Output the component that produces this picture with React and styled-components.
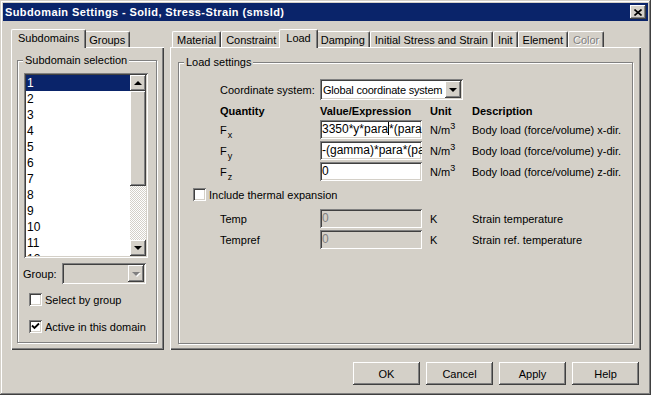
import React from 'react'
import styled, { createGlobalStyle } from 'styled-components'

const GlobalStyle = createGlobalStyle`
  html, body { margin: 0; padding: 0; background: #d4d0c8; }
  body {
    font-family: "Liberation Sans", Arial, sans-serif;
    font-size: 11px;
    color: #000;
  }
  * { box-sizing: border-box; }
`

const raised = `
  box-shadow: inset -1px -1px #404040, inset 1px 1px #fff, inset -2px -2px #808080, inset 2px 2px #d4d0c8;
`
const sunken = `
  box-shadow: inset 1px 1px #808080, inset -1px -1px #fff, inset 2px 2px #404040, inset -2px -2px #d4d0c8;
`

const Window = styled.div`
  width: 651px;
  height: 395px;
  background: #d4d0c8;
  padding: 3px;
  display: flex;
  flex-direction: column;
  box-shadow: inset -1px -1px #404040, inset 1px 1px #d4d0c8, inset -2px -2px #808080, inset 2px 2px #fff;
`

const TitleBar = styled.div`
  height: 18px;
  background: #0a246a;
  color: #fff;
  font-weight: bold;
  letter-spacing: 0.4px;
  display: flex;
  align-items: center;
  justify-content: space-between;
  padding: 0 2px 0 2px;
`

const CloseButton = styled.div`
  width: 16px;
  height: 14px;
  background: #d4d0c8;
  display: flex;
  align-items: center;
  justify-content: center;
  ${raised}
`

const Content = styled.div`
  display: flex;
  gap: 6px;
  padding: 8px 7px 0 8px;
`

const Column = styled.div`
  width: ${p => p.$w}px;
  display: flex;
  flex-direction: column;
`

const TabStrip = styled.div`
  height: 18px;
  display: flex;
  align-items: flex-end;
  padding-left: 2px;
`

const Tab = styled.div`
  position: relative;
  height: ${p => (p.$active ? 19 : 16)}px;
  margin: 0 ${p => (p.$active ? -2 : 0)}px ${p => (p.$active ? -1 : 0)}px;
  z-index: ${p => (p.$active ? 2 : 1)};
  padding: 0 ${p => (p.$active ? 6 : 4)}px ${p => (p.$active ? 2 : 0)}px;
  display: flex;
  align-items: center;
  background: #d4d0c8;
  border-top: 1px solid #fff;
  border-left: 1px solid #fff;
  border-right: 1px solid #404040;
  border-top-left-radius: 2px;
  border-top-right-radius: 2px;
  box-shadow: inset -1px 0 #808080;
  color: ${p => (p.$disabled ? '#808080' : '#000')};
  text-shadow: ${p => (p.$disabled ? '1px 1px #fff' : 'none')};
  white-space: nowrap;
`

const TabPanel = styled.div`
  height: 303px;
  display: flex;
  flex-direction: column;
  padding: ${p => p.$pad};
  box-shadow: inset 1px 1px #fff, inset -1px -1px #404040, inset -2px -2px #808080;
`

const GroupBox = styled.div`
  flex: 1;
  display: flex;
  flex-direction: column;
  border: 1px solid #808080;
  box-shadow: inset 1px 1px #fff, 1px 1px #fff;
`

const Legend = styled.span`
  align-self: flex-start;
  margin: -7px 0 0 5px;
  padding: 0 2px;
  line-height: 13px;
  background: #d4d0c8;
`

const ListBox = styled.div`
  margin: 6px 0 0 6px;
  width: 124px;
  height: 185px;
  background: #fff;
  padding: 2px;
  display: flex;
  ${sunken}
`

const Items = styled.div`
  flex: 1;
  overflow: hidden;
`

const Item = styled.div`
  height: 16px;
  line-height: 16px;
  padding-left: 1px;
  font-size: 12px;
  background: ${p => (p.$selected ? '#0a246a' : 'transparent')};
  color: ${p => (p.$selected ? '#fff' : '#000')};
`

const ScrollBar = styled.div`
  width: 16px;
  display: flex;
  flex-direction: column;
`

const ScrollButton = styled.div`
  width: 16px;
  height: ${p => p.$h || 16}px;
  background: #d4d0c8;
  display: flex;
  align-items: center;
  justify-content: center;
  ${raised}
`

const Track = styled.div`
  flex: 1;
  background: repeating-conic-gradient(#fff 0 25%, #d4d0c8 0 50%) 0 0 / 2px 2px;
`

const Triangle = styled.span`
  width: 0;
  height: 0;
  border-left: 4px solid transparent;
  border-right: 4px solid transparent;
  ${p => (p.$up ? 'border-bottom' : 'border-top')}: 4px solid ${p => (p.$disabled ? '#808080' : '#000')};
  ${p => (p.$disabled ? 'filter: drop-shadow(1px 1px 0 #fff);' : '')}
`

const FieldRow = styled.div`
  display: flex;
  align-items: center;
  margin: ${p => p.$m || '0'};
  padding-left: ${p => p.$indent || 0}px;
`

const Label = styled.span`
  width: ${p => p.$w}px;
  flex-shrink: 0;
`

const Combo = styled.div`
  width: ${p => p.$w}px;
  height: 21px;
  padding: 2px;
  display: flex;
  align-items: center;
  background: ${p => (p.$disabled ? '#d4d0c8' : '#fff')};
  ${sunken}
`

const ComboText = styled.span`
  flex: 1;
  padding-left: 1px;
  letter-spacing: -0.2px;
  white-space: nowrap;
  overflow: hidden;
`

const ComboButton = styled(ScrollButton)`
  height: 17px;
`

const CheckRow = styled.label`
  display: flex;
  align-items: center;
  gap: 3px;
  height: 13px;
  margin: ${p => p.$m};
`

const CheckBox = styled.span`
  width: 13px;
  height: 13px;
  background: #fff;
  display: flex;
  align-items: center;
  justify-content: center;
  ${sunken}
`

const FormGrid = styled.div`
  display: grid;
  grid-template-columns: 100px 110px 42px 1fr;
  grid-template-rows: ${p => (p.$header ? '13px' : '19px')};
  grid-auto-rows: 19px;
  row-gap: 2px;
  align-items: center;
  margin: ${p => p.$m};
  padding-left: 41px;
`

const HeadCell = styled.span`
  font-weight: bold;
  line-height: 13px;
  margin-bottom: 1px;
`

const Input = styled.div`
  width: 102px;
  height: 19px;
  padding: 2px 2px 0;
  font-size: 12px;
  line-height: 15px;
  white-space: nowrap;
  overflow: hidden;
  background: ${p => (p.$disabled ? '#d4d0c8' : '#fff')};
  color: ${p => (p.$disabled ? '#808080' : '#000')};
  ${sunken}
`

const Caret = styled.span`
  display: inline-block;
  width: 1px;
  height: 13px;
  background: #000;
  vertical-align: -2px;
`

const Sub = styled.sub`
  font-size: 9px;
  vertical-align: -4px;
  line-height: 0;
  margin-left: 1px;
`

const Sup = styled.sup`
  font-size: 9px;
  vertical-align: 5px;
  line-height: 0;
`

const Footer = styled.div`
  display: flex;
  justify-content: flex-end;
  gap: 6px;
  padding: 12px 9px 7px 0;
`

const PushButton = styled.div`
  width: 67px;
  height: 23px;
  display: flex;
  align-items: center;
  justify-content: center;
  background: #d4d0c8;
  ${raised}
`

const Check = () => (
  <svg width="9" height="9" viewBox="0 0 9 9">
    <path d="M1 3.5 L3.5 6 L8 1.5" stroke="#000" strokeWidth="1.8" fill="none" />
  </svg>
)

const CloseX = () => (
  <svg width="8" height="7" viewBox="0 0 8 7">
    <path d="M0.5 0.5 L7.5 6.5 M7.5 0.5 L0.5 6.5" stroke="#000" strokeWidth="1.6" />
  </svg>
)

const rightTabs = ['Material', 'Constraint', 'Load', 'Damping', 'Initial Stress and Strain', 'Init', 'Element', 'Color']

const quantities = [
  { q: 'x', value: <>3350*y*para<Caret />*(para-(h-y)</>, desc: 'Body load (force/volume) x-dir.' },
  { q: 'y', value: '-(gamma)*para*(para-1)', desc: 'Body load (force/volume) y-dir.' },
  { q: 'z', value: '0', desc: 'Body load (force/volume) z-dir.' },
]

export default function App() {
  return (
    <>
      <GlobalStyle />
      <Window>
        <TitleBar>
          <span>Subdomain Settings - Solid, Stress-Strain (smsld)</span>
          <CloseButton><CloseX /></CloseButton>
        </TitleBar>
        <Content>
          <Column $w={153}>
            <TabStrip>
              <Tab $active>Subdomains</Tab>
              <Tab>Groups</Tab>
            </TabStrip>
            <TabPanel $pad="13px 7px 7px 6px">
              <GroupBox>
                <Legend>Subdomain selection</Legend>
                <ListBox>
                  <Items>
                    {Array.from({ length: 12 }, (_, i) => (
                      <Item key={i} $selected={i === 0}>{i + 1}</Item>
                    ))}
                  </Items>
                  <ScrollBar>
                    <ScrollButton><Triangle $up /></ScrollButton>
                    <ScrollButton $h={95} />
                    <Track />
                    <ScrollButton><Triangle /></ScrollButton>
                  </ScrollBar>
                </ListBox>
                <FieldRow $m="5px 0 0 0" $indent={5}>
                  <Label $w={39}>Group:</Label>
                  <Combo $w={84} $disabled>
                    <ComboText />
                    <ComboButton><Triangle $disabled /></ComboButton>
                  </Combo>
                </FieldRow>
                <CheckRow $m="9px 0 0 11px">
                  <CheckBox />
                  Select by group
                </CheckRow>
                <CheckRow $m="14px 0 0 11px">
                  <CheckBox><Check /></CheckBox>
                  Active in this domain
                </CheckRow>
              </GroupBox>
            </TabPanel>
          </Column>
          <Column $w={471}>
            <TabStrip>
              {rightTabs.map(t => (
                <Tab key={t} $active={t === 'Load'} $disabled={t === 'Color'}>{t}</Tab>
              ))}
            </TabStrip>
            <TabPanel $pad="15px 8px 6px 8px">
              <GroupBox>
                <Legend>Load settings</Legend>
                <FieldRow $m="10px 0 0 0" $indent={41}>
                  <Label $w={100}>Coordinate system:</Label>
                  <Combo $w={143}>
                    <ComboText>Global coordinate system</ComboText>
                    <ComboButton><Triangle /></ComboButton>
                  </Combo>
                </FieldRow>
                <FormGrid $header $m="5px 0 0 0">
                  <HeadCell>Quantity</HeadCell>
                  <HeadCell>Value/Expression</HeadCell>
                  <HeadCell>Unit</HeadCell>
                  <HeadCell>Description</HeadCell>
                  {quantities.map(r => (
                    <React.Fragment key={r.q}>
                      <span>F<Sub>{r.q}</Sub></span>
                      <Input>{r.value}</Input>
                      <span>N/m<Sup>3</Sup></span>
                      <span>{r.desc}</span>
                    </React.Fragment>
                  ))}
                </FormGrid>
                <CheckRow $m="7px 0 0 14px">
                  <CheckBox />
                  Include thermal expansion
                </CheckRow>
                <FormGrid $m="8px 0 0 0">
                  <span>Temp</span>
                  <Input $disabled>0</Input>
                  <span>K</span>
                  <span>Strain temperature</span>
                  <span>Tempref</span>
                  <Input $disabled>0</Input>
                  <span>K</span>
                  <span>Strain ref. temperature</span>
                </FormGrid>
              </GroupBox>
            </TabPanel>
          </Column>
        </Content>
        <Footer>
          <PushButton>OK</PushButton>
          <PushButton>Cancel</PushButton>
          <PushButton>Apply</PushButton>
          <PushButton>Help</PushButton>
        </Footer>
      </Window>
    </>
  )
}
